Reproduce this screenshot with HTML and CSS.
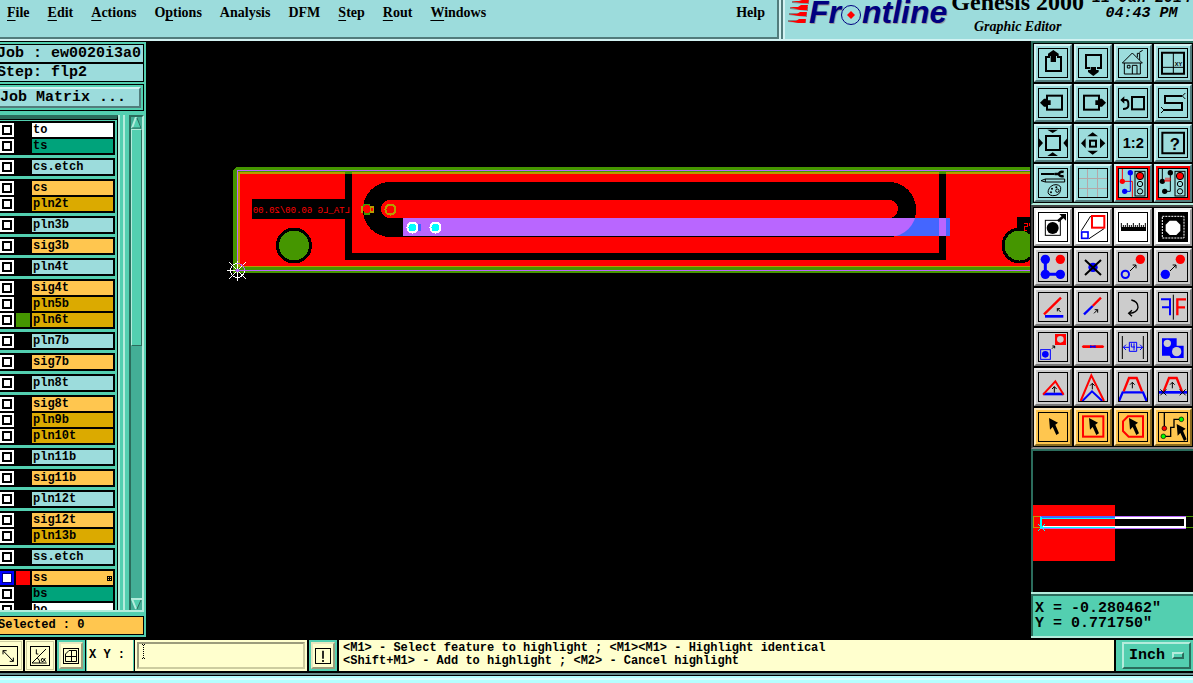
FILE: index.html
```html
<!DOCTYPE html>
<html lang="en">
<head>
<meta charset="utf-8">
<title>Genesis 2000 Graphic Editor</title>
<link rel="stylesheet" href="styles.css">
</head>
<body>
<svg class="defs" aria-hidden="true">
  <defs>
    <path id="cursor" d="M0 0L27 14L19 20L30 46L22 51L11 27L3 35Z"/>
    <g id="up"><path d="M0 18V0M-7 7L0 0L7 7" fill="none" stroke="#000" stroke-width="3"/></g>
    <g id="diag"><path d="M0 18L18 0M8 0H18V10" fill="none" stroke="#000" stroke-width="3"/></g>
    <g id="light"><rect x="51" y="10" width="30" height="74" fill="none" stroke="#000" stroke-width="3"/><circle cx="66" cy="24" r="11" fill="red" stroke="#000" stroke-width="3"/><circle cx="66" cy="48" r="8" fill="none" stroke="#000" stroke-width="3"/><circle cx="66" cy="70" r="8" fill="none" stroke="#000" stroke-width="3"/></g>
  </defs>
</svg>

<header class="header">
  <nav class="menubar">
    <button><u>F</u>ile</button>
    <button><u>E</u>dit</button>
    <button><u>A</u>ctions</button>
    <button>O<u>p</u>tions</button>
    <button>Analysis</button>
    <button>DFM</button>
    <button><u>S</u>tep</button>
    <button><u>R</u>out</button>
    <button><u>W</u>indows</button>
    <button class="help">Help</button>
  </nav>
  <div class="brand">
    <div class="logo">
      <svg width="21" height="24" viewBox="0 0 21 24"><path d="M4 1H21V4L4 3ZM2 7H20V11L2 9ZM1 13H19V17L1 15ZM0 20H18V23L0 22Z" fill="gray"/><path d="M4 1H11L14 0H21L20 3H13ZM2 7H10L13 5H20L19 10H12ZM1 14H9L12 12H19L18 16H11ZM0 21H8L11 19H18L17 23H10Z" fill="red"/></svg>
      <span>Fr</span><svg class="target" width="21" height="21" viewBox="0 0 21 21"><circle cx="10" cy="10" r="9.500" fill="#9cdcdc" stroke="#000080"/><path d="M10 6L14 10L10 14L6 10Z" fill="red"/></svg><span>ntline</span>
    </div>
    <div class="product"><strong>Genesis 2000</strong><em>Graphic Editor</em></div>
    <div class="clock"><span>11 Jan 2014</span><span>04:43 PM</span></div>
  </div>
</header>

<main class="main">
  <aside class="sidebar">
    <div class="info">Job : ew0020i3a0</div>
    <div class="info">Step: flp2</div>
    <div class="matrix"><button>Job Matrix ...</button></div>
    <div class="layers">
      <div class="layer-list">
        <ul><li><input type="checkbox" aria-label="to"><i></i><span class="white">to</span></li><li><input type="checkbox" aria-label="ts"><i></i><span class="green">ts</span></li></ul>
        <ul><li><input type="checkbox" aria-label="cs.etch"><i></i><span class="cyan">cs.etch</span></li></ul>
        <ul><li><input type="checkbox" aria-label="cs"><i></i><span class="amber">cs</span></li><li><input type="checkbox" aria-label="pln2t"><i></i><span class="gold">pln2t</span></li></ul>
        <ul><li><input type="checkbox" aria-label="pln3b"><i></i><span class="cyan">pln3b</span></li></ul>
        <ul><li><input type="checkbox" aria-label="sig3b"><i></i><span class="amber">sig3b</span></li></ul>
        <ul><li><input type="checkbox" aria-label="pln4t"><i></i><span class="cyan">pln4t</span></li></ul>
        <ul><li><input type="checkbox" aria-label="sig4t"><i></i><span class="amber">sig4t</span></li><li><input type="checkbox" aria-label="pln5b"><i></i><span class="gold">pln5b</span></li><li><input type="checkbox" aria-label="pln6t"><i class="shown"></i><span class="gold">pln6t</span></li></ul>
        <ul><li><input type="checkbox" aria-label="pln7b"><i></i><span class="cyan">pln7b</span></li></ul>
        <ul><li><input type="checkbox" aria-label="sig7b"><i></i><span class="amber">sig7b</span></li></ul>
        <ul><li><input type="checkbox" aria-label="pln8t"><i></i><span class="cyan">pln8t</span></li></ul>
        <ul><li><input type="checkbox" aria-label="sig8t"><i></i><span class="amber">sig8t</span></li><li><input type="checkbox" aria-label="pln9b"><i></i><span class="gold">pln9b</span></li><li><input type="checkbox" aria-label="pln10t"><i></i><span class="gold">pln10t</span></li></ul>
        <ul><li><input type="checkbox" aria-label="pln11b"><i></i><span class="cyan">pln11b</span></li></ul>
        <ul><li><input type="checkbox" aria-label="sig11b"><i></i><span class="amber">sig11b</span></li></ul>
        <ul><li><input type="checkbox" aria-label="pln12t"><i></i><span class="cyan">pln12t</span></li></ul>
        <ul><li><input type="checkbox" aria-label="sig12t"><i></i><span class="amber">sig12t</span></li><li><input type="checkbox" aria-label="pln13b"><i></i><span class="gold">pln13b</span></li></ul>
        <ul><li><input type="checkbox" aria-label="ss.etch"><i></i><span class="cyan">ss.etch</span></li></ul>
        <ul><li><input type="checkbox" checked aria-label="ss"><i class="work"></i><span class="amber">ss<svg width="5" height="5" viewBox="0 0 5 5"><path d="M0 0H5V5H0Z"/><path d="M1 1h1v1H1zM3 1h1v1H3zM1 3h1v1H1zM3 3h1v1H3z" fill="#ffc64f"/></svg></span></li><li><input type="checkbox" aria-label="bs"><i></i><span class="green">bs</span></li><li><input type="checkbox" aria-label="bo"><i></i><span class="white">bo</span></li></ul>
      </div>
      <div class="edge"></div>
      <div class="scrollbar">
        <svg width="11" height="12" viewBox="0 0 11 12"><path d="M5 0L0 11H11Z" fill="#53cfb0"/><path d="M5 0L1 11" stroke="#b4ecdc" stroke-width="2"/><path d="M6 1L10 11H1" fill="none" stroke="#2b6c5c"/></svg>
        <div class="thumb"></div>
        <svg width="11" height="12" viewBox="0 0 11 12"><path d="M0 1H11L5 12Z" fill="#53cfb0"/><path d="M11 1H1L5 11" fill="none" stroke="#b4ecdc" stroke-width="2"/><path d="M10 2L6 11" stroke="#2b6c5c"/></svg>
      </div>
    </div>
    <div class="selected">Selected : 0</div>
  </aside>

  <section class="canvas" aria-label="Graphic canvas">
    <svg width="100%" height="100%" shape-rendering="crispEdges">
      <defs><clipPath id="slot"><path d="M390 182H889A27 27 0 0 1 889 237H390ZM939 174H946V260H939Z"/></clipPath></defs>
      <g transform="translate(-146 -41)">
        <path d="M233 170L236 167H2400V273H233Z" fill="#459600"/>
        <path d="M238 172H2400V267H238Z" fill="#b89a00"/>
        <path d="M240 174H2400V266H240Z" fill="red"/>
        <path d="M2400 170.500H237.500V270.500H2400" fill="none" stroke="#b966ff"/>
        <path d="M345 171H352V174H345ZM939 171H946V174H939Z" fill="#459600"/>
        <path d="M345 174H352V253H939V174H946V260H345ZM252 199H345V219H252Z"/>
        <text class="mirrored" transform="translate(350 213) scale(-1 1)">LTA_LG 60.00/20.00</text>
        <rect x="363" y="182" width="553" height="55" rx="27"/>
        <rect x="381" y="200" width="517" height="18" rx="9" fill="red"/>
        <rect x="403" y="218" width="547" height="18" fill="#4466ff"/>
        <rect x="403" y="218" width="547" height="18" fill="#b966ff" clip-path="url(#slot)"/>
        <circle cx="294" cy="245.500" r="18"/><circle cx="294" cy="245.500" r="15" fill="#459600"/>
        <rect x="1017" y="217" width="18" height="14"/>
        <circle cx="1019.500" cy="245.500" r="18"/><circle cx="1019.500" cy="245.500" r="15" fill="#459600"/>
        <path d="M1024 223H1027V226H1024V230H1027M1029 223V226" fill="none" stroke="red"/>
        <path d="M363 204H370V207H363ZM364 212H370V215H364Z" fill="#459600"/>
        <circle cx="367" cy="209" r="4" fill="red"/><path d="M361 206H363V213H361ZM370 206H374V213H370Z" fill="#b89a00"/><path d="M371 208H373V211H371Z" fill="red"/>
        <circle cx="390.500" cy="209.500" r="5" fill="red" stroke="#b89a00" stroke-width="2"/>
        <circle cx="412.500" cy="227.500" r="5" fill="cyan" stroke="#fff" stroke-width="2"/><rect x="418" y="224" width="3" height="7" fill="#4466ff"/>
        <circle cx="435.500" cy="227.500" r="5" fill="cyan" stroke="#fff" stroke-width="2"/>
        <g fill="none" stroke="#fff"><circle cx="237.500" cy="270.500" r="7"/><path d="M227 270.500H237M237.500 261V281M229 262L246 279M246 262L229 279"/></g>
        <path d="M237.500 263.500A7 7 0 0 1 244.500 271M237 270.500H247" fill="none" stroke="#b966ff"/><circle cx="237.500" cy="270.500" r="2" fill="#b966ff"/>
      </g>
    </svg>
  </section>

  <aside class="tools">
    <div class="grid view">
      <button aria-label="Pan up"><svg viewBox="0 0 90 90"><rect x="24" y="27" width="45" height="42" fill="none" stroke="#000" stroke-width="6"/><path d="M36 20H57V45H36Z" fill="#9cdcdc"/><path d="M46 6L62 17V24H54V42H38V24H30V17Z"/></svg></button>
      <button aria-label="Pan down"><svg viewBox="0 0 90 90"><rect x="24" y="21" width="45" height="39" fill="none" stroke="#000" stroke-width="6"/><path d="M36 56H57V66H36Z" fill="#9cdcdc"/><path d="M38 57H54V66H62V72L46 84L30 72V66H38Z"/></svg></button>
      <button aria-label="Home"><svg viewBox="0 0 90 90"><path d="M13 45L43 15L73 45H13M19 45V78H67V45M28 52H36V60H28ZM43 78V52H57V78M58 28V16H65V36M64 13L74 7" fill="none" stroke="#000" stroke-width="3"/></svg></button>
      <button aria-label="Coordinates window"><svg viewBox="0 0 90 90"><path d="M12 14H78V77H12Z" fill="none" stroke="#000" stroke-width="6"/><path d="M46 14V77M12 58H78" stroke="#000" stroke-width="3"/><text x="50" y="54" font-size="17">XY</text></svg></button>
      <button aria-label="Pan left"><svg viewBox="0 0 90 90"><rect x="27" y="23" width="45" height="42" fill="none" stroke="#000" stroke-width="6"/><path d="M6 44L18 32H24V37H38V51H24V56H18Z"/></svg></button>
      <button aria-label="Pan right"><svg viewBox="0 0 90 90"><rect x="18" y="23" width="45" height="42" fill="none" stroke="#000" stroke-width="6"/><path d="M84 44L72 32H66V37H52V51H66V56H72Z"/></svg></button>
      <button aria-label="Previous view"><svg viewBox="0 0 90 90"><rect x="42" y="27" width="36" height="37" fill="none" stroke="#000" stroke-width="6"/><path d="M18 36H25Q31 38 31 46V54Q29 63 15 63" fill="none" stroke="#000" stroke-width="6"/><path d="M7 36L19 25V47Z"/></svg></button>
      <button aria-label="Serpentine"><svg viewBox="0 0 90 90"><path d="M72 24H21V45H72V66H18" fill="none" stroke="#000" stroke-width="6"/><path d="M82 15L73 24L82 33M9 57L18 66L9 75" fill="none" stroke="#000" stroke-width="3"/></svg></button>
      <button aria-label="Zoom out"><svg viewBox="0 0 90 90"><rect x="24" y="24" width="42" height="42" fill="none" stroke="#000" stroke-width="6"/><path d="M28 5H60L44 15ZM28 84H60L44 73ZM2 30V60L15 45ZM88 30V60L76 45Z"/></svg></button>
      <button aria-label="Zoom in"><svg viewBox="0 0 90 90"><rect x="36" y="38" width="18" height="18" fill="none" stroke="#000" stroke-width="6"/><path d="M28 25L44 13L60 25ZM28 68L44 80L60 68ZM23 31V61L9 46ZM66 31V61L82 46Z"/></svg></button>
      <button aria-label="Zoom one to two"><svg viewBox="0 0 90 90"><text x="14" y="61" font-size="44" font-weight="bold">1:2</text></svg></button>
      <button aria-label="Help on tool"><svg viewBox="0 0 90 90"><path d="M13 14H78V76H13Z" fill="none" stroke="#000" stroke-width="6"/><text x="35" y="65" font-size="50">?</text></svg></button>
      <button aria-label="Setup"><svg viewBox="0 0 90 90"><path d="M9 15H50V21H9Z"/><path d="M50 18H62Q66 9 77 12M62 18Q66 27 77 24" fill="none" stroke="#000" stroke-width="7"/><path d="M9 38L22 33H80V42H22ZM22 33V42" fill="none" stroke="#000" stroke-width="3"/><path d="M31 67Q37 50 54 50Q70 51 68 64Q66 84 44 83Q27 81 31 67Z" fill="none" stroke="#000" stroke-width="3"/><circle cx="42" cy="62" r="3"/><circle cx="55" cy="58" r="3"/><circle cx="39" cy="73" r="3"/><circle cx="58" cy="68" r="5" fill="none" stroke="#000" stroke-width="3"/></svg></button>
      <button aria-label="Grid"><svg viewBox="0 0 90 90"><path d="M28.500 3V87M58.500 3V87M3 31.500H87M3 61.500H87" stroke="#b4a8a8" stroke-width="3"/></svg></button>
      <button class="alert" aria-label="Net highlight"><svg viewBox="0 0 90 90"><path d="M13 3V40H43V87" fill="none" stroke="red" stroke-width="3"/><circle cx="13" cy="40" r="8" fill="red"/><path d="M37 14V70H20" fill="none" stroke="#00f" stroke-width="3"/><circle cx="37" cy="14" r="8" fill="#00f"/><circle cx="20" cy="70" r="8" fill="#00f"/><use href="#light"/></svg></button>
      <button class="alert" aria-label="Net compare"><svg viewBox="0 0 90 90"><path d="M13 3V40M37 14V70H20" fill="none" stroke="#000" stroke-width="3"/><circle cx="13" cy="40" r="8"/><circle cx="37" cy="14" r="8"/><circle cx="20" cy="70" r="8"/><path d="M18 39H36V29M24 39V29M30 39V29" fill="none" stroke="red" stroke-width="3"/><use href="#light"/></svg></button>
    </div>
    <div class="grid edit">
      <button class="white" aria-label="Move feature"><svg viewBox="0 0 90 90"><rect x="22" y="25" width="45" height="45" fill="none" stroke="#000" stroke-width="3"/><circle cx="44" cy="48" r="18"/><path d="M60 28L80 10" stroke="#000" stroke-width="8"/><path d="M64 6H84V26Z"/></svg></button>
      <button class="white" aria-label="Resize"><svg viewBox="0 0 90 90"><path d="M10 56L38 12M33 80L78 50" stroke="#000" stroke-width="3"/><rect x="42" y="12" width="37" height="35" fill="#fff" stroke="red" stroke-width="6"/><rect x="11" y="60" width="19" height="19" fill="#fff" stroke="#00f" stroke-width="5"/></svg></button>
      <button class="white" aria-label="Measure"><svg viewBox="0 0 90 90"><path d="M9 45H84V57H9Z"/><path d="M10 33V46M16 39V46M22 39V46M28 33V46M34 39V46M40 39V46M46 33V46M52 39V46M58 39V46M64 33V46M70 39V46M76 39V46M82 33V46" stroke="#000" stroke-width="3"/></svg></button>
      <button class="white" aria-label="Clip area"><svg viewBox="0 0 90 90"><path d="M3 3H87V87H3Z"/><path d="M13 13H78V78H13Z" fill="none" stroke="#fff" stroke-width="3" stroke-dasharray="6 3"/><path d="M35 26H55L67 38V57L55 69H35L23 57V38Z" fill="#fff"/></svg></button>
      <button aria-label="Connect"><svg viewBox="0 0 90 90"><path d="M22 22V67H67" fill="none" stroke="#00f" stroke-width="9"/><g fill="#00f"><circle cx="22" cy="22" r="14"/><circle cx="22" cy="67" r="14"/><circle cx="67" cy="67" r="14"/></g><circle cx="67" cy="22" r="14" fill="red"/></svg></button>
      <button aria-label="Delete"><svg viewBox="0 0 90 90"><circle cx="45" cy="46" r="14" fill="#00f"/><path d="M21 24L69 69M69 24L21 69" stroke="#000" stroke-width="6"/></svg></button>
      <button aria-label="Move to"><svg viewBox="0 0 90 90"><circle cx="22" cy="67" r="11" fill="none" stroke="#00f" stroke-width="6"/><circle cx="67" cy="22" r="14" fill="red"/><use href="#diag" x="36" y="39"/></svg></button>
      <button aria-label="Copy to"><svg viewBox="0 0 90 90"><circle cx="22" cy="67" r="14" fill="#00f"/><circle cx="67" cy="22" r="14" fill="red"/><use href="#diag" x="36" y="39"/></svg></button>
      <button aria-label="Rotate line"><svg viewBox="0 0 90 90"><path d="M18 67L69 17" stroke="red" stroke-width="7"/><path d="M21 73H76" stroke="#00f" stroke-width="8"/><path d="M68 60L58 50M58 58V50H66" fill="none" stroke="#000" stroke-width="3"/></svg></button>
      <button aria-label="Extend line"><svg viewBox="0 0 90 90"><path d="M44 42L69 17" stroke="red" stroke-width="7"/><path d="M18 67L44 42" stroke="#00f" stroke-width="7"/><path d="M48 64L59 53M50 53H59V62" fill="none" stroke="#000" stroke-width="3"/></svg></button>
      <button aria-label="Rotate"><svg viewBox="0 0 90 90"><path d="M40 24Q60 28 60 46Q58 62 34 64M42 55L32 64L42 73" fill="none" stroke="#000" stroke-width="4"/></svg></button>
      <button aria-label="Mirror"><svg viewBox="0 0 90 90"><path d="M9 22H36V70M12 46H36" fill="none" stroke="#00f" stroke-width="6"/><path d="M46 8V83" stroke="#000" stroke-width="3"/><path d="M84 22H58V70M58 46H81" fill="none" stroke="red" stroke-width="7"/></svg></button>
      <button aria-label="Substitute"><svg viewBox="0 0 90 90"><path d="M51 6H84V39H51Z" fill="red"/><circle cx="67" cy="22" r="10" fill="#ccc"/><rect x="8" y="53" width="29" height="29" fill="none" stroke="#00f" stroke-width="3"/><circle cx="22" cy="67" r="10" fill="#00f"/><path d="M42 50L50 42M43 42H50V49" fill="none" stroke="#000" stroke-width="3"/></svg></button>
      <button aria-label="Break line"><svg viewBox="0 0 90 90"><path d="M15 40H75L79 44L75 48H15L11 44Z" fill="red"/><path d="M36 40L44 42L53 40V48L44 46L36 48Z" fill="#00f"/></svg></button>
      <button aria-label="Spacing"><svg viewBox="0 0 90 90"><path d="M13 12V81M76 12V81" stroke="#000" stroke-width="3"/><path d="M34 31H56V58H34ZM40 34V45H51M48 34V55M33 46H16M24 38L16 46L24 54M57 46H74M66 38L74 46L66 54" fill="none" stroke="#00f" stroke-width="3"/></svg></button>
      <button aria-label="Copy shapes"><svg viewBox="0 0 90 90"><path d="M12 19H56V41H77V78H39L35 71H12Z" fill="#00f"/><circle cx="28" cy="34" r="11" fill="#ccc"/><circle cx="56" cy="59" r="14" fill="#ccc"/></svg></button>
      <button aria-label="Close corner"><svg viewBox="0 0 90 90"><path d="M16 66H76" stroke="#00f" stroke-width="8"/><path d="M15 68L52 28L77 68" fill="none" stroke="red" stroke-width="6"/><use href="#up" x="49" y="44"/></svg></button>
      <button aria-label="Move vertex"><svg viewBox="0 0 90 90"><path d="M13 87L42 58L73 87" fill="none" stroke="#00f" stroke-width="6"/><path d="M8 87L40 10L78 87" fill="none" stroke="red" stroke-width="6"/><use href="#up" x="43" y="34"/></svg></button>
      <button aria-label="Move segment"><svg viewBox="0 0 90 90"><path d="M3 87L14 61H75L86 87" fill="none" stroke="#00f" stroke-width="7"/><path d="M17 58L33 18H56L72 58" fill="none" stroke="red" stroke-width="7"/><use href="#up" x="43" y="31"/></svg></button>
      <button aria-label="Stretch segment"><svg viewBox="0 0 90 90"><path d="M3 61H87" stroke="#00f" stroke-width="8"/><path d="M17 58L33 18H56L72 58" fill="none" stroke="red" stroke-width="7"/><path d="M7 52L25 70M25 52L7 70M65 52L83 70M83 52L65 70" stroke="#000" stroke-width="3"/><use href="#up" x="43" y="31"/></svg></button>
      <button class="orange" aria-label="Select"><svg viewBox="0 0 90 90"><use href="#cursor" x="33" y="18"/></svg></button>
      <button class="orange" aria-label="Select in rectangle"><svg viewBox="0 0 90 90"><rect x="15" y="13" width="61" height="61" fill="none" stroke="red" stroke-width="6"/><use href="#cursor" x="33" y="18"/></svg></button>
      <button class="orange" aria-label="Select in polygon"><svg viewBox="0 0 90 90"><path d="M30 13H75V74H32L15 57V28Z" fill="none" stroke="red" stroke-width="6"/><use href="#cursor" x="33" y="18"/></svg></button>
      <button class="orange" aria-label="Select net"><svg viewBox="0 0 90 90"><path d="M19 3V48M16 73H38V46H48V22H68" fill="none" stroke="#000" stroke-width="4"/><g stroke="#000" stroke-width="2"><circle cx="19" cy="49" r="7" fill="red"/><circle cx="70" cy="22" r="7" fill="#0f0"/><circle cx="16" cy="73" r="7" fill="#0f0"/></g><use href="#cursor" x="56" y="36"/></svg></button>
    </div>
    <div class="overview">
      <svg width="100%" height="100%" shape-rendering="crispEdges">
        <rect y="54" width="82" height="56" fill="red"/>
        <path d="M8 65.500H0V76.500H8" fill="none" stroke="#b89a00"/>
        <path d="M153 65.500H400M153 76.500H400" stroke="#459600"/>
        <path d="M7 65.500H153M7 77.500H153" stroke="#b966ff"/>
        <path d="M8 67H152V76H8" fill="none" stroke="#fff" stroke-width="2"/>
        <path d="M82 76H8V67H82" fill="none" stroke="cyan"/><path d="M8 66H82" stroke="#4466ff" stroke-width="2"/><path d="M8 66V77" stroke="cyan" stroke-width="2"/>
        <path d="M5 73L12 80M12 73L5 80" stroke="cyan"/>
      </svg>
    </div>
    <div class="coords"><div>X = -0.280462"</div><div>Y = 0.771750"</div></div>
  </aside>
</main>

<footer class="bottom">
  <button class="snap first" aria-label="Snap diagonal"><svg viewBox="0 0 60 60"><path d="M15 14L46 46M15 25V14H26M46 35V46H35" fill="none" stroke="#000" stroke-width="3"/></svg></button>
  <button class="snap" aria-label="Snap angle"><svg viewBox="0 0 60 60"><path d="M6 51L48 9M6 51H50M19 10V24H25M22 36Q30 42 29 51" fill="none" stroke="#000" stroke-width="3"/><path d="M46 36Q41 49 36 47Q31 43 36 37Q42 38 47 47" fill="none" stroke="#000" stroke-width="3"/></svg></button>
  <div class="slot"><button class="raised" aria-label="Snap grid"><svg viewBox="0 0 48 48"><path d="M7.500 18L18 7.500H40.500V40.500H7.500ZM25.500 8V40M8 25.500H40" fill="none" stroke="#000" stroke-width="3"/></svg></button></div>
  <label class="xy" for="xy">X Y :</label>
  <div class="entry"><input id="xy" type="text"><svg class="caret" width="3" height="15" viewBox="0 0 3 15"><path d="M0 .5H3M0 14.500H3M1.500 1V14" stroke="#000" stroke-dasharray="1 1"/></svg></div>
  <div class="slot bang"><button class="raised" aria-label="Interrupt"><svg viewBox="0 0 48 48"><path d="M24 8V32M24 36V42" stroke="#000" stroke-width="5"/></svg></button></div>
  <div class="message"><div>&lt;M1&gt; - Select feature to highlight ; &lt;M1&gt;&lt;M1&gt; - Highlight identical</div><div>&lt;Shift+M1&gt; - Add to highlight ; &lt;M2&gt; - Cancel highlight</div></div>
  <div class="units"><select aria-label="Units"><option>Inch</option></select><span class="knob"></span></div>
</footer>
<div class="frame-edge"></div>
</body>
</html>
```
FILE: styles.css
```css
* { box-sizing: border-box; }

body {
  --teal: #53cfb0;
  --teal-light: #b4ecdc;
  --teal-dark: #2b6c5c;
  --cyan: #9cdcdc;
  --cyan-light: #d2f2f2;
  --cyan-dark: #527c7c;
  --cream: #ffffce;
  --amber: #ffc64f;
  margin: 0;
  height: 100vh;
  display: flex;
  flex-direction: column;
  overflow: hidden;
  background: #000;
  color: #000;
  font: bold 15px/15px "Liberation Mono", monospace;
}

button, input, select { font: inherit; color: inherit; border-radius: 0; margin: 0; }
button { padding: 0; border: 0; background: none; }
svg { display: block; flex: none; }
.defs { position: absolute; width: 0; height: 0; }

/* Header */
.header {
  display: flex;
  flex: none;
  height: 41px;
  background: var(--cyan);
  border-bottom: 2px solid var(--cyan-light);
  font-family: "Liberation Serif", serif;
}
.menubar {
  flex: 1;
  display: flex;
  align-items: flex-start;
  gap: 18px;
  padding: 5px 12px 0 7px;
  border: solid var(--cyan-dark);
  border-width: 0 2px 2px 0;
  font-size: 14px;
  line-height: 16px;
}
.menubar u { text-decoration-skip-ink: none; text-underline-offset: 3px; text-decoration-thickness: 1px; }
.help { margin-left: auto; }
.brand {
  display: flex;
  align-items: flex-start;
  width: 414px;
  overflow: hidden;
  padding-left: 7px;
  border-left: 2px solid var(--cyan-light);
  box-shadow: inset 2px 0 var(--cyan-dark), inset 4px 0 var(--cyan-light);
}
.logo {
  display: flex;
  color: #000080;
  font: italic bold 32px/32px "Liberation Sans", sans-serif;
  text-shadow: 1px 1px #999;
  margin-top: -4px;
}
.logo svg { margin-top: 4px; }
.logo .target { margin-top: 9px; }
.product { display: flex; flex-direction: column; align-items: center; margin: -13px 0 0 4px; white-space: nowrap; }
.product strong { font-size: 24px; line-height: 30px; }
.product em { font-size: 14px; line-height: 20px; }
.clock {
  flex: 1;
  display: flex;
  flex-direction: column;
  align-items: center;
  margin-top: -9px;
  padding-left: 6px;
  font: italic bold 15px/15px "Liberation Mono", monospace;
  white-space: nowrap;
}

/* Main area */
.main { flex: 1; display: flex; min-height: 0; }
.sidebar {
  width: 146px;
  display: flex;
  flex-direction: column;
  margin-bottom: 1px;
  padding: 2px 2px 2px 0;
  border-top: 1px solid #000;
  background: var(--teal);
  overflow: hidden;
}
.info {
  flex: none;
  height: 19px;
  margin-left: -5px;
  padding-left: 1px;
  border: 1px solid #000;
  background: var(--cyan);
  line-height: 18px;
  white-space: nowrap;
}
.matrix { margin: 2px 0 4px -5px; padding: 2px; border: 1px solid #000; }
.matrix button {
  width: 100%;
  height: 21px;
  border: 2px solid;
  border-color: var(--cyan-light) var(--cyan-dark) var(--cyan-dark) var(--cyan-light);
  background: var(--cyan);
  text-align: left;
}
.layers { flex: 1; display: flex; min-height: 0; border-bottom: 2px solid var(--teal-light); }
.layer-list {
  flex: 1;
  display: flex;
  flex-direction: column;
  gap: 3px;
  overflow: hidden;
  padding: 2px 2px 0 0;
  border-top: 4px solid var(--teal-dark);
  border-right: 1px solid #000;
  box-shadow: inset 0 1px #000;
  font-size: 12px;
  line-height: 14px;
}
.layer-list ul {
  flex: none;
  display: flex;
  flex-direction: column;
  gap: 2px;
  margin: 0;
  padding: 2px 2px 2px 0;
  list-style: none;
  background: #000;
}
.layer-list li { display: flex; gap: 2px; height: 14px; }
.layer-list input {
  appearance: none;
  width: 14px;
  height: 14px;
  border: 2px solid #fff;
  background: #fff;
  box-shadow: inset 0 0 0 2px #000;
}
.layer-list input:checked { border-color: #00f; box-shadow: inset 0 0 0 1px #000080; }
.layer-list i { width: 14px; }
.layer-list span { flex: 1; display: flex; align-items: center; justify-content: space-between; padding: 0 1px; }
.shown { background: #459600; }
.work { background: red; }
.layer-list .white { background: #fff; }
.layer-list .green { background: #00a37b; }
.layer-list .cyan { background: var(--cyan); }
.layer-list .amber { background: var(--amber); }
.layer-list .gold { background: #dbaa00; }
.edge { width: 7px; border: solid var(--teal-light); border-width: 0 2px; }
.scrollbar {
  display: flex;
  flex-direction: column;
  align-items: center;
  width: 15px;
  margin-left: 4px;
  border: 2px solid;
  border-color: var(--teal-dark) var(--teal-light) var(--teal-light) var(--teal-dark);
  border-bottom: 0;
  background: #43ae96;
}
.thumb {
  width: 11px;
  flex: 0 0 44%;
  margin-bottom: auto;
  border: 1px solid;
  border-color: var(--teal-light) var(--teal-dark) var(--teal-dark) var(--teal-light);
  background: var(--teal);
}
.selected {
  height: 19px;
  margin: 4px 0 0 -5px;
  padding-left: 2px;
  border: 1px solid #000;
  background: var(--amber);
  font-size: 12px;
  line-height: 17px;
}
.canvas { flex: 1; min-width: 0; margin-right: 1px; overflow: hidden; }
.canvas svg, .overview svg { width: 100%; height: 100%; }
.mirrored { font: 9px "Liberation Mono", monospace; fill: red; }

/* Tool palette */
.tools { width: 162px; display: flex; flex-direction: column; }
.grid {
  display: grid;
  grid-template-columns: repeat(4, 38px);
  gap: 2px;
  padding: 1px;
  border: solid var(--teal-dark);
  border-width: 2px 0 2px 2px;
}
.view { border-bottom-color: var(--teal-light); }
.edit { border-color: #444; border-bottom-color: #888; }
.grid button {
  width: 38px;
  height: 38px;
  padding: 2px;
  border: 2px solid;
  border-color: var(--cyan-light) var(--cyan-dark) var(--cyan-dark) var(--cyan-light);
  background: var(--cyan);
}
.grid svg, .snap svg, .raised svg { outline: 1px solid #000; outline-offset: -1px; }
.grid svg { width: 30px; height: 30px; }
.grid text { font-family: "Liberation Sans", sans-serif; }
.grid .alert svg { box-shadow: 0 0 0 2px red; }
.edit button { background: #ccc; border-color: #eee #777 #777 #eee; }
.edit .white { background: #fff; border-color: #eee #999 #999 #eee; }
.edit .orange { background: var(--amber); border-color: #ffe8b8 #8a6a20 #8a6a20 #ffe8b8; }
.overview {
  flex: 1;
  min-height: 0;
  border: solid var(--teal-dark);
  border-width: 2px 0 0 2px;
  overflow: hidden;
}
.coords {
  padding: 7px 0 5px 4px;
  border: solid var(--teal-light);
  border-width: 2px 0;
  background: var(--teal);
  box-shadow: inset 2px 2px var(--teal-dark);
  white-space: nowrap;
}

/* Bottom bar */
.bottom { flex: none; display: flex; height: 31px; margin-top: 2px; gap: 2px; font-size: 12px; }
.snap {
  width: 30px;
  padding: 3px;
  border: 1px solid var(--cream);
  background: var(--cream);
  box-shadow: inset 0 0 0 1px #cdcda0;
}
.snap.first { margin-left: -7px; }
.snap svg { width: 20px; height: 20px; margin: auto; }
.slot { padding: 2px; background: var(--teal); }
.raised {
  width: 24px;
  height: 27px;
  border: 2px solid;
  border-color: #e8e8c0 #9c9c7c #9c9c7c #e8e8c0;
  background: var(--cream);
}
.raised svg { width: 16px; height: 16px; margin: auto; }
.xy {
  width: 48px;
  margin-left: -1px;
  padding-left: 2px;
  border: solid var(--teal);
  border-width: 0 1px;
  background: var(--cream);
  line-height: 30px;
}
.entry { position: relative; width: 172px; margin-left: -1px; padding: 2px; background: var(--cream); }
.entry input {
  width: 100%;
  height: 27px;
  padding: 0 4px;
  border: 2px solid;
  border-color: #9c9c7c #cdcda0 #cdcda0 #9c9c7c;
  background: var(--cream);
  outline: 0;
}
.caret { position: absolute; left: 7px; top: 4px; }
.message {
  flex: 1;
  min-width: 0;
  padding: 2px 4px;
  background: var(--cream);
  line-height: 13px;
  white-space: nowrap;
  overflow: hidden;
}
.units { position: relative; width: 77px; padding: 2px 2px 2px 6px; background: var(--teal); }
.units select {
  appearance: none;
  width: 100%;
  height: 27px;
  padding: 0 5px;
  border: 2px solid;
  border-color: var(--teal-light) var(--teal-dark) var(--teal-dark) var(--teal-light);
  background: var(--teal);
  font-size: 15px;
}
.knob {
  position: absolute;
  right: 9px;
  top: 12px;
  width: 12px;
  height: 7px;
  border: 2px solid;
  border-color: var(--teal-light) var(--teal-dark) var(--teal-dark) var(--teal-light);
  pointer-events: none;
}
.frame-edge {
  flex: none;
  height: 10px;
  margin-top: 2px;
  border-top: 2px solid #668b8b;
  background: linear-gradient(#000 1px, #b4ffff 1px 3px, #e0ffff 3px 5px, #b4ffff 5px);
}
```
